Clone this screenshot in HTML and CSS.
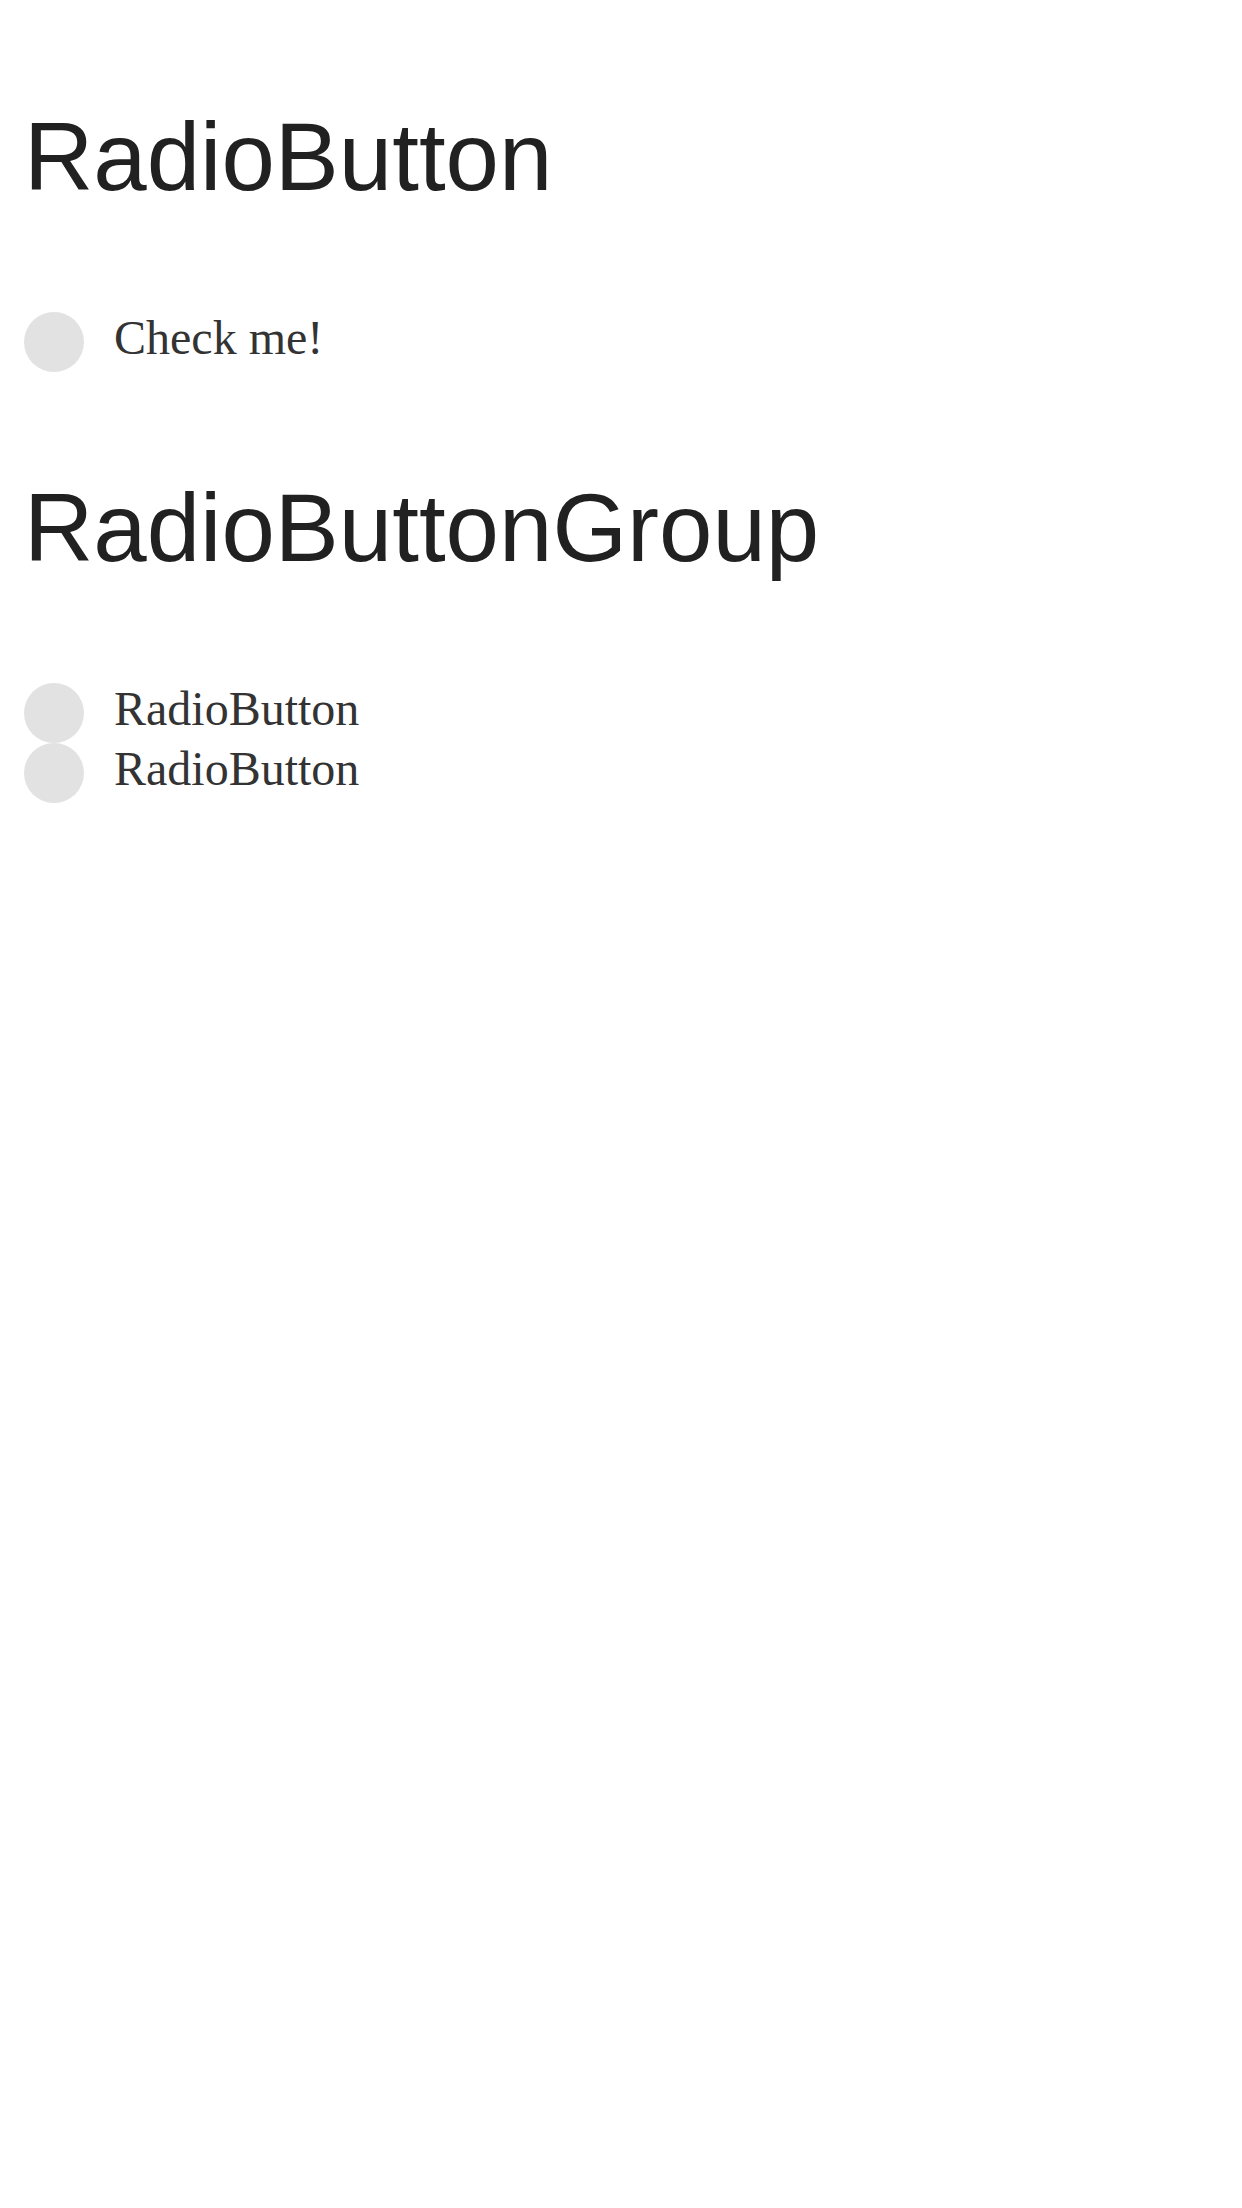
FILE: index.html
```html
<!DOCTYPE html>
<html>
<head>
<meta charset="utf-8">
<link rel="stylesheet" href="styles.css">
</head>
<body>
<div class="page">
  <h1 class="title">RadioButton</h1>
  <div class="radio single">
    <span class="dot"></span>
    <span class="label">Check me!</span>
  </div>
  <h2 class="title">RadioButtonGroup</h2>
  <div class="group">
    <div class="radio">
      <span class="dot"></span>
      <span class="label">RadioButton</span>
    </div>
    <div class="radio">
      <span class="dot"></span>
      <span class="label">RadioButton</span>
    </div>
  </div>
</div>
</body>
</html>
```
FILE: styles.css
```css
html, body {
  margin: 0;
  padding: 0;
  background: #ffffff;
}
.page {
  display: flex;
  flex-direction: column;
  align-items: flex-start;
  padding: 101px 24px 0;
}
.title {
  margin: 0 0 100px;
  font-family: "Liberation Sans", Arial, sans-serif;
  font-weight: 400;
  font-size: 96px;
  line-height: 111px;
  color: #212121;
}
.radio {
  display: flex;
  align-items: flex-start;
  gap: 30px;
  height: 60px;
}
.radio.single {
  margin-bottom: 100px;
}
.group {
  display: flex;
  flex-direction: column;
}
.dot {
  width: 60px;
  height: 60px;
  border-radius: 50%;
  background: #e2e2e2;
  flex: none;
}
.label {
  font-family: "Liberation Serif", "Times New Roman", serif;
  font-size: 48px;
  line-height: 52px;
  color: #333333;
}
```
